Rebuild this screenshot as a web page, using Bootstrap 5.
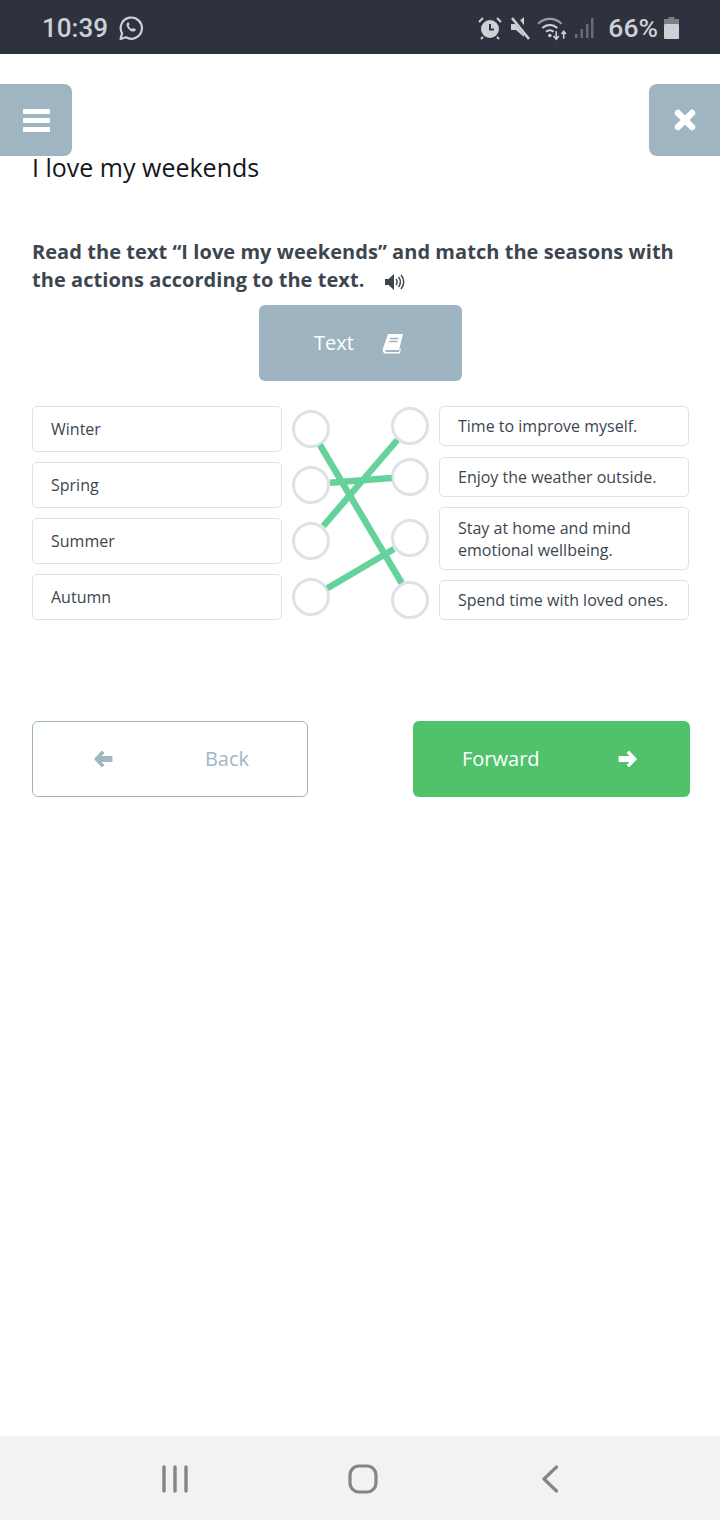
<!DOCTYPE html>
<html lang="en">
<head>
    <meta charset="UTF-8">
    <meta name="viewport" content="width=device-width, initial-scale=1.0">
    <title>I love my weekends</title>
    <link rel="stylesheet" href="https://cdn.jsdelivr.net/npm/bootstrap@5.3.0/dist/css/bootstrap.min.css">
    <style>
        body {
            font-family: "Open Sans", sans-serif;
            background-color: #fff;
            color: #3c4650;
        }

        .phone-page {
            height: 1520px;
            position: relative;
            overflow: hidden;
        }

        .status-strip {
            height: 54px;
            background-color: #2d323e;
            color: #cdd0d4;
            padding: 2px 41px 0 42px;
            font-family: Roboto, sans-serif;
            font-weight: 500;
        }

        .status-time { font-size: 26px; line-height: 1; margin-right: 10px; }
        .status-pct { font-size: 26.5px; line-height: 1; margin: 0 6px 0 14px; }
        .status-gap-a { margin-right: 8px; }
        .status-gap-b { margin-right: 6px; }
        .status-gap-c { margin-right: 6px; }

        .corner-btn {
            position: absolute;
            top: 84px;
            height: 72px;
            background-color: #a0b5c2;
            border: 0;
            padding: 0;
        }

        .corner-menu { left: 0; width: 72px; border-radius: 0 8px 8px 0; }
        .corner-close { right: 0; width: 71px; border-radius: 8px 0 0 8px; }

        .lesson-body { padding: 97px 31px 0 32px; }

        .lesson-title {
            font-size: 25px;
            line-height: 32px;
            font-weight: 400;
            color: #14171a;
            margin: 0 0 55px;
        }

        .task-text {
            font-size: 20px;
            letter-spacing: .05px;
            line-height: 28px;
            font-weight: 700;
            color: #3c4650;
            margin: 0 0 11px;
        }

        .speaker-icon { margin: 0 0 -1px 15px; }

        .text-btn {
            width: 203px;
            height: 76px;
            background-color: #9fb4c1;
            border: 0;
            border-radius: 6px;
            color: #fff;
            font-size: 20px;
            gap: 28px;
            padding: 0 3px 0 0;
        }

        .match-area {
            position: relative;
            margin-top: 25px;
            height: 214px;
        }

        .answer-col { width: 250px; flex: none; }
        .answer-col-left { gap: 10px; }

        .answer-box {
            border: 1px solid #dfe3e6;
            border-radius: 5px;
            padding: 0 18px;
            font-size: 16px;
            line-height: 22px;
            color: #3c4650;
            background-color: #fff;
        }

        .answer-left { height: 46px; }
        .answer-right { height: 40px; margin-top: 10px; }
        .answer-right:first-child { margin-top: 0; }
        .answer-second { margin-top: 11px; }
        .answer-tall { height: 63px; }

        .dot-col { width: 38px; flex: none; }
        .dot-col-left { margin: 0 0 0 10px; padding-top: 4px; gap: 18px; }
        .dot-col-right { margin: 0 10px 0 61px; padding-top: 1px; }

        .link-dot {
            width: 38px;
            height: 38px;
            border: 3px solid #dde3e5;
            border-radius: 50%;
            background-color: #fff;
            flex: none;
        }

        .dot-r2 { margin-top: 13px; }
        .dot-r3 { margin-top: 23px; }
        .dot-r4 { margin-top: 24px; }

        .match-lines {
            position: absolute;
            left: -32px;
            top: -406px;
            width: 720px;
            height: 1520px;
            pointer-events: none;
        }

        .nav-row { margin: 101px -1px 0 0; }

        .step-btn {
            height: 76px;
            border-radius: 6px;
            font-size: 20px;
        }

        .step-back {
            width: 276px;
            background-color: #fff;
            border: 1px solid #9fb4b9;
            color: #a3b7c2;
            padding: 0 58px 0 60px;
        }

        .step-forward {
            width: 277px;
            background-color: #4fc26b;
            border: 0;
            color: #fff;
            padding: 0 52px 0 49px;
        }

        .android-bar {
            position: absolute;
            left: 0;
            right: 0;
            bottom: 0;
            height: 84px;
            background-color: #f2f2f2;
            padding: 2px 161px 0;
        }
    </style>
</head>
<body>
    <div class="phone-page">
        <div class="status-strip d-flex align-items-center justify-content-between">
            <div class="d-flex align-items-center">
                <span class="status-time">10:39</span>
                <svg width="26" height="26" viewBox="0 0 26 26" fill="none">
                    <path d="M2.5 24l1.6-5.6A10.6 10.6 0 1 1 8 22.3z" stroke="#cdd0d4" stroke-width="2.2" stroke-linejoin="round"/>
                    <path d="M9.6 7.6c-1.4 1-1.5 3 .2 5.3 1.8 2.5 4.4 4.2 6.3 3.6 1.3-.4 1.8-1.3 1.7-2.2l-2.6-1.4-1.2 1.2c-1.3-.6-2.8-2-3.4-3.4l1-1.1-1-2.3z" fill="#cdd0d4"/>
                </svg>
            </div>
            <div class="d-flex align-items-center">
                <svg class="status-gap-a" width="24" height="24" viewBox="0 0 24 24" fill="#cdd0d4">
                    <circle cx="12" cy="13" r="9"/>
                    <path d="M12 8v5.5h4" stroke="#2d323e" stroke-width="2" fill="none"/>
                    <path d="M1 6l4-4M23 6l-4-4M5 21l-2 2M19 21l2 2" stroke="#cdd0d4" stroke-width="2"/>
                </svg>
                <svg class="status-gap-b" width="21" height="24" viewBox="0 0 21 24" fill="#cdd0d4">
                    <path d="M1 8h5l8-7v20l-8-7H1z"/>
                    <path d="M3 0l18 23" stroke="#2d323e" stroke-width="6"/>
                    <path d="M2 2l17 21" stroke="#cdd0d4" stroke-width="2.6"/>
                </svg>
                <svg class="status-gap-c" width="31" height="26" viewBox="0 0 29 24" fill="none" stroke="#9a9da3" stroke-width="2">
                    <path d="M1 8c6.5-6 15.5-6 22 0"/>
                    <path d="M5 12c4-3.8 10-3.8 14 0" stroke="#cdd0d4"/>
                    <path d="M8.5 15.5c2-1.800 5-1.800 7 0" stroke="#cdd0d4"/>
                    <circle cx="12" cy="19" r="1.6" fill="#cdd0d4" stroke="none"/>
                    <path d="M18 15v7M15.5 19.5l2.5 3 2.500-3M25 22v-7M23 17.5l2-2.500 2 2.500" stroke="#cdd0d4" stroke-width="1.5"/>
                </svg>
                <svg width="20" height="22" viewBox="0 0 20 22" fill="#666a73">
                    <rect x="1" y="17" width="2.5" height="4"/>
                    <rect x="6.5" y="12" width="2.5" height="9"/>
                    <rect x="12" y="7" width="2.5" height="14"/>
                    <rect x="17" y="1" width="2.5" height="20"/>
                </svg>
                <span class="status-pct">66%</span>
                <svg width="15" height="22" viewBox="0 0 15 22">
                    <path d="M4.5 0h6v2H15v5H0V2h4.5z" fill="#7c7f87"/>
                    <rect y="7" width="15" height="15" rx="1" fill="#cdd0d4"/>
                </svg>
            </div>
        </div>

        <button class="corner-btn corner-menu d-flex align-items-center justify-content-center" type="button" aria-label="Menu">
            <svg width="27" height="23" viewBox="0 0 27 23" fill="#fff">
                <rect width="27" height="5" rx="1"/>
                <rect y="9" width="27" height="5" rx="1"/>
                <rect y="18" width="27" height="5" rx="1"/>
            </svg>
        </button>
        <button class="corner-btn corner-close d-flex align-items-center justify-content-center" type="button" aria-label="Close">
            <svg width="22" height="22" viewBox="0 0 22 22">
                <path d="M4 4l14 14M18 4L4 18" stroke="#fff" stroke-width="6.5" stroke-linecap="round"/>
            </svg>
        </button>

        <div class="lesson-body">
            <h1 class="lesson-title">I love my weekends</h1>
            <p class="task-text">Read the text “I love my weekends” and match the seasons with the actions according to the text.
                <svg class="speaker-icon" width="20" height="18" viewBox="0 0 20 18" fill="#3c4650">
                    <path d="M0 6h3.5L9 1v16l-5.5-5H0z"/>
                    <path d="M11 6c1.4 1.5 1.4 4.5 0 6M13.5 4c2.5 2.8 2.5 7.2 0 10M16 2c3.6 4 3.6 10 0 14" fill="none" stroke="#3c4650" stroke-width="1.5"/>
                </svg>
            </p>

            <div class="d-flex justify-content-center">
                <button class="text-btn d-flex align-items-center justify-content-center" type="button">
                    <span>Text</span>
                    <svg width="22" height="21" viewBox="0 0 22 21">
                        <path d="M6 1h15l-4 16H4.5c-1.400 0-1.500 2 0 2H17l1-3.500 1 .5-1.200 4.500H4C1 20.500 .3 18 1 15.500z" fill="#fff"/>
                        <path d="M8 5.500h8.500M7.200 8.500h8.500" stroke="#9fb4c1" stroke-width="1.400"/>
                    </svg>
                </button>
            </div>

            <div class="match-area d-flex">
                <div class="answer-col answer-col-left d-flex flex-column">
                    <div class="answer-box answer-left d-flex align-items-center">Winter</div>
                    <div class="answer-box answer-left d-flex align-items-center">Spring</div>
                    <div class="answer-box answer-left d-flex align-items-center">Summer</div>
                    <div class="answer-box answer-left d-flex align-items-center">Autumn</div>
                </div>
                <div class="dot-col dot-col-left d-flex flex-column">
                    <div class="link-dot"></div>
                    <div class="link-dot"></div>
                    <div class="link-dot"></div>
                    <div class="link-dot"></div>
                </div>
                <div class="dot-col dot-col-right d-flex flex-column">
                    <div class="link-dot"></div>
                    <div class="link-dot dot-r2"></div>
                    <div class="link-dot dot-r3"></div>
                    <div class="link-dot dot-r4"></div>
                </div>
                <div class="answer-col d-flex flex-column">
                    <div class="answer-box answer-right d-flex align-items-center">Time to improve myself.</div>
                    <div class="answer-box answer-right answer-second d-flex align-items-center">Enjoy the weather outside.</div>
                    <div class="answer-box answer-right answer-tall d-flex align-items-center">Stay at home and mind emotional wellbeing.</div>
                    <div class="answer-box answer-right d-flex align-items-center">Spend time with loved ones.</div>
                </div>
                <svg class="match-lines" viewBox="0 0 720 1520" fill="none" stroke="#64d29a" stroke-width="6.5">
                    <line x1="320" y1="445" x2="401.7" y2="583"/>
                    <line x1="397.3" y1="440" x2="323.3" y2="526"/>
                    <line x1="330" y1="482.7" x2="391.7" y2="478"/>
                    <line x1="327.3" y1="588.3" x2="394" y2="549"/>
                </svg>
            </div>

            <div class="nav-row d-flex justify-content-between">
                <button class="step-btn step-back d-flex align-items-center justify-content-between" type="button">
                    <svg width="20" height="18" viewBox="0 0 20 18"><path d="M9 1L1.5 9 9 17l2-2-3.500-3.500H19v-5H7.500L11 3z" fill="#a3b7c2" stroke="#a3b7c2" stroke-linejoin="round"/></svg>
                    <span>Back</span>
                </button>
                <button class="step-btn step-forward d-flex align-items-center justify-content-between" type="button">
                    <span>Forward</span>
                    <svg width="20" height="18" viewBox="0 0 20 18"><path d="M11 1l7.500 8-7.500 8-2-2 3.500-3.500H1v-5h11.500L9 3z" fill="#fff" stroke="#fff" stroke-linejoin="round"/></svg>
                </button>
            </div>
        </div>

        <div class="android-bar d-flex align-items-center justify-content-between">
            <svg width="28" height="28" viewBox="0 0 28 28" stroke="#858585" stroke-width="3.4" stroke-linecap="round">
                <path d="M3 2v24M14 2v24M25 2v24"/>
            </svg>
            <svg class="me-1" width="30" height="30" viewBox="0 0 30 30" fill="none" stroke="#858585" stroke-width="3.2">
                <rect x="2" y="2" width="26" height="26" rx="9"/>
            </svg>
            <svg width="18" height="28" viewBox="0 0 18 28" fill="none" stroke="#858585" stroke-width="3.2" stroke-linecap="round" stroke-linejoin="round">
                <path d="M15.5 2L3 14l12.5 12"/>
            </svg>
        </div>
    </div>
    <script src="https://cdn.jsdelivr.net/npm/bootstrap@5.3.0/dist/js/bootstrap.bundle.min.js"></script>
</body>
</html>
